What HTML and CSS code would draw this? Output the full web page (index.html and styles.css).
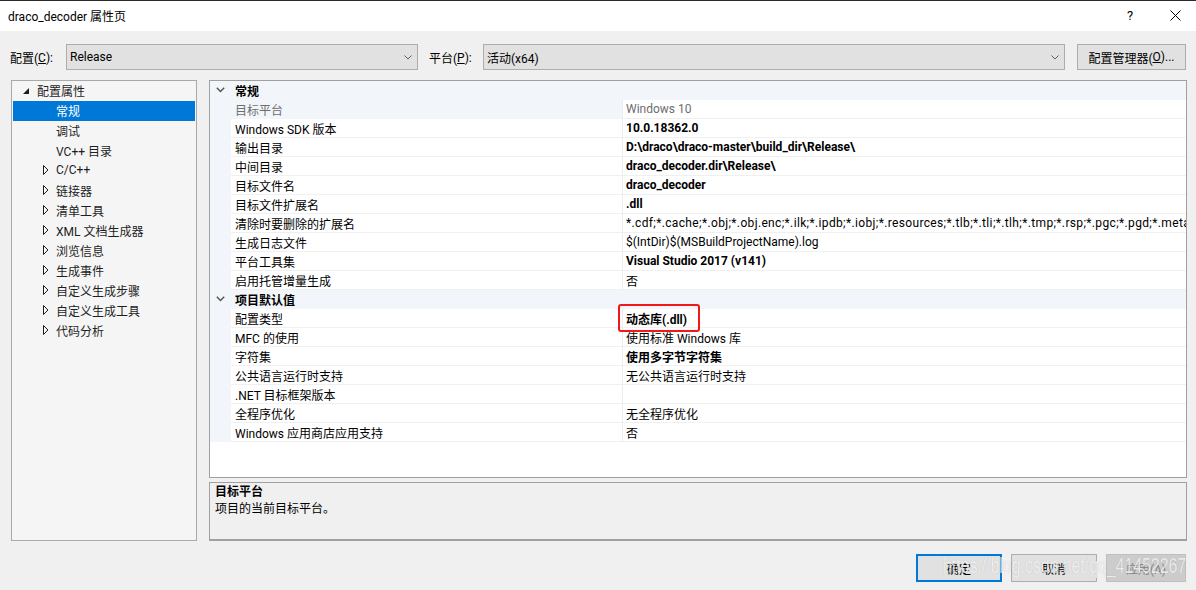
FILE: index.html
```html
<!DOCTYPE html>
<html lang="zh-CN">
<head>
<meta charset="utf-8">
<title>draco_decoder 属性页</title>
<link rel="stylesheet" href="styles.css">
</head>
<body>
<div class="window">
  <div class="titlebar">
    <span class="title">draco_decoder 属性页</span>
    <span class="tb-help">?</span>
    <span class="tb-close"><svg width="11" height="11" viewBox="0 0 11 11"><path d="M0.5 0.5 L10.5 10.5 M10.5 0.5 L0.5 10.5" stroke="#000" stroke-width="1" fill="none"/></svg></span>
  </div>

  <div class="toolbar">
    <span class="lbl lbl-cfg">配置(<u>C</u>):</span>
    <div class="combo combo-cfg"><span class="combo-text">Release</span><svg class="chev" width="8" height="5" viewBox="0 0 8 5"><polyline points="0.5,0.5 4,4 7.5,0.5" fill="none" stroke="#606060" stroke-width="1"/></svg></div>
    <span class="lbl lbl-plat">平台(<u>P</u>):</span>
    <div class="combo combo-plat"><span class="combo-text">活动(x64)</span><svg class="chev" width="8" height="5" viewBox="0 0 8 5"><polyline points="0.5,0.5 4,4 7.5,0.5" fill="none" stroke="#606060" stroke-width="1"/></svg></div>
    <button class="btn btn-mgr">配置管理器(<u>O</u>)...</button>
  </div>

  <div class="content">
    <div class="tree">
      <div class="tnode lvl0"><span class="twisty"><svg width="6" height="6" viewBox="0 0 6 6"><polygon points="6,0 6,6 0,6" fill="#1e1e1e"/></svg></span><span>配置属性</span></div>
      <div class="tnode lvl1 selected"><span class="twisty"></span><span>常规</span></div>
      <div class="tnode lvl1"><span class="twisty"></span><span>调试</span></div>
      <div class="tnode lvl1"><span class="twisty"></span><span>VC++ 目录</span></div>
      <div class="tnode lvl1"><span class="twisty"><svg class="tri" width="6" height="10" viewBox="0 0 6 10"><polygon points="0.5,0.5 5,5 0.5,9.5" fill="none" stroke="#1e1e1e" stroke-width="1"/></svg></span><span>C/C++</span></div>
      <div class="tnode lvl1"><span class="twisty"><svg class="tri" width="6" height="10" viewBox="0 0 6 10"><polygon points="0.5,0.5 5,5 0.5,9.5" fill="none" stroke="#1e1e1e" stroke-width="1"/></svg></span><span>链接器</span></div>
      <div class="tnode lvl1"><span class="twisty"><svg class="tri" width="6" height="10" viewBox="0 0 6 10"><polygon points="0.5,0.5 5,5 0.5,9.5" fill="none" stroke="#1e1e1e" stroke-width="1"/></svg></span><span>清单工具</span></div>
      <div class="tnode lvl1"><span class="twisty"><svg class="tri" width="6" height="10" viewBox="0 0 6 10"><polygon points="0.5,0.5 5,5 0.5,9.5" fill="none" stroke="#1e1e1e" stroke-width="1"/></svg></span><span>XML 文档生成器</span></div>
      <div class="tnode lvl1"><span class="twisty"><svg class="tri" width="6" height="10" viewBox="0 0 6 10"><polygon points="0.5,0.5 5,5 0.5,9.5" fill="none" stroke="#1e1e1e" stroke-width="1"/></svg></span><span>浏览信息</span></div>
      <div class="tnode lvl1"><span class="twisty"><svg class="tri" width="6" height="10" viewBox="0 0 6 10"><polygon points="0.5,0.5 5,5 0.5,9.5" fill="none" stroke="#1e1e1e" stroke-width="1"/></svg></span><span>生成事件</span></div>
      <div class="tnode lvl1"><span class="twisty"><svg class="tri" width="6" height="10" viewBox="0 0 6 10"><polygon points="0.5,0.5 5,5 0.5,9.5" fill="none" stroke="#1e1e1e" stroke-width="1"/></svg></span><span>自定义生成步骤</span></div>
      <div class="tnode lvl1"><span class="twisty"><svg class="tri" width="6" height="10" viewBox="0 0 6 10"><polygon points="0.5,0.5 5,5 0.5,9.5" fill="none" stroke="#1e1e1e" stroke-width="1"/></svg></span><span>自定义生成工具</span></div>
      <div class="tnode lvl1"><span class="twisty"><svg class="tri" width="6" height="10" viewBox="0 0 6 10"><polygon points="0.5,0.5 5,5 0.5,9.5" fill="none" stroke="#1e1e1e" stroke-width="1"/></svg></span><span>代码分析</span></div>
    </div>

    <div class="right">
      <div class="grid">
        <div class="section"><span class="gutter"><svg width="9" height="6" viewBox="0 0 9 6"><polyline points="0.8,0.8 4.5,4.5 8.2,0.8" fill="none" stroke="#555" stroke-width="1.5"/></svg></span><span class="sec-title">常规</span></div>
        <div class="prow"><span class="gutter"></span><span class="pname disabled">目标平台</span><span class="pval disabled">Windows 10</span></div>
        <div class="prow"><span class="gutter"></span><span class="pname">Windows SDK 版本</span><span class="pval b">10.0.18362.0</span></div>
        <div class="prow"><span class="gutter"></span><span class="pname">输出目录</span><span class="pval b">D:\draco\draco-master\build_dir\Release\</span></div>
        <div class="prow"><span class="gutter"></span><span class="pname">中间目录</span><span class="pval b">draco_decoder.dir\Release\</span></div>
        <div class="prow"><span class="gutter"></span><span class="pname">目标文件名</span><span class="pval b">draco_decoder</span></div>
        <div class="prow"><span class="gutter"></span><span class="pname">目标文件扩展名</span><span class="pval b">.dll</span></div>
        <div class="prow"><span class="gutter"></span><span class="pname">清除时要删除的扩展名</span><span class="pval wide">*.cdf;*.cache;*.obj;*.obj.enc;*.ilk;*.ipdb;*.iobj;*.resources;*.tlb;*.tli;*.tlh;*.tmp;*.rsp;*.pgc;*.pgd;*.meta;*.tlog;*.manifest;*.res;*.pch;*.exp</span></div>
        <div class="prow"><span class="gutter"></span><span class="pname">生成日志文件</span><span class="pval">$(IntDir)$(MSBuildProjectName).log</span></div>
        <div class="prow"><span class="gutter"></span><span class="pname">平台工具集</span><span class="pval b">Visual Studio 2017 (v141)</span></div>
        <div class="prow"><span class="gutter"></span><span class="pname">启用托管增量生成</span><span class="pval">否</span></div>
        <div class="section"><span class="gutter"><svg width="9" height="6" viewBox="0 0 9 6"><polyline points="0.8,0.8 4.5,4.5 8.2,0.8" fill="none" stroke="#555" stroke-width="1.5"/></svg></span><span class="sec-title">项目默认值</span></div>
        <div class="prow"><span class="gutter"></span><span class="pname">配置类型</span><span class="pval b marked">动态库(.dll)<span class="redbox"></span></span></div>
        <div class="prow"><span class="gutter"></span><span class="pname">MFC 的使用</span><span class="pval">使用标准 Windows 库</span></div>
        <div class="prow"><span class="gutter"></span><span class="pname">字符集</span><span class="pval b">使用多字节字符集</span></div>
        <div class="prow"><span class="gutter"></span><span class="pname">公共语言运行时支持</span><span class="pval">无公共语言运行时支持</span></div>
        <div class="prow"><span class="gutter"></span><span class="pname">.NET 目标框架版本</span><span class="pval"></span></div>
        <div class="prow"><span class="gutter"></span><span class="pname">全程序优化</span><span class="pval">无全程序优化</span></div>
        <div class="prow"><span class="gutter"></span><span class="pname">Windows 应用商店应用支持</span><span class="pval">否</span></div>
      </div>
      <div class="desc">
        <div class="desc-title">目标平台</div>
        <div class="desc-text">项目的当前目标平台。</div>
      </div>
    </div>
  </div>

  <div class="footer">
    <button class="btn btn-ok">确定</button>
    <button class="btn btn-cancel">取消</button>
    <button class="btn btn-apply" disabled>应用(A)</button>
  </div>

  <div class="watermark">https://blog.csdn.net/qq_41452267</div>
</div>
</body>
</html>
```

FILE: styles.css
```css
* { box-sizing: border-box; }
html, body { margin: 0; padding: 0; }
body {
  width: 1196px;
  height: 590px;
  overflow: hidden;
  background: #f0f0f0;
  font-family: Roboto, "Noto Sans CJK SC", sans-serif;
  font-size: 12px;
  color: #000;
}
.window {
  position: relative;
  width: 1196px;
  height: 590px;
  display: flex;
  flex-direction: column;
}

/* title bar */
.titlebar {
  height: 31px;
  flex: none;
  background: #fff;
  border-top: 1px solid #2b2b2b;
  display: flex;
  align-items: center;
  padding-left: 8px;
  padding-bottom: 1px;
}
.title { flex: 1; font-size: 12px; color: #000; }
.tb-help { width: 12px; text-align: center; font-size: 13px; margin-right: 34px; }
.tb-close { width: 11px; height: 11px; margin-right: 15px; display: flex; }

/* toolbar */
.toolbar {
  flex: none;
  height: 26px;
  margin-top: 13px;
  padding-left: 10px;
  display: flex;
  align-items: stretch;
}
.lbl { display: flex; align-items: center; padding-top: 1px; }
.lbl-cfg { width: 56px; }
.lbl-plat { width: 54px; margin-left: 11px; }
.combo {
  display: flex;
  align-items: center;
  background: #e1e1e1;
  border: 1px solid #adadad;
  padding-left: 3px;
  padding-right: 5px;
}
.combo-text { flex: 1; }
.combo-cfg { width: 352px; }
.combo-plat { width: 582px; }
.chev { flex: none; }
.btn {
  font: inherit;
  color: #000;
  background: #e1e1e1;
  border: 1px solid #adadad;
  padding: 0;
  display: flex;
  align-items: center;
  justify-content: center;
}
.btn-mgr { width: 109px; margin-left: 12px; }

/* content */
.content {
  flex: none;
  height: 461px;
  margin-top: 10px;
  display: flex;
}
.tree {
  width: 186px;
  margin-left: 11px;
  background: #f5f5f5;
  border: 1px solid #a9a9a9;
  padding-top: 0;
}
.tnode {
  height: 20px;
  display: flex;
  align-items: center;
  color: #1e1e1e;
  margin: 0 1px;
  padding-bottom: 2px;
}
.tnode.lvl0 { padding-left: 5px; }
.tnode.lvl1 { padding-left: 24px; }
.twisty { width: 19px; height: 18px; display: flex; align-items: center; flex: none; }
.lvl0 .twisty svg { margin-left: 5px; margin-top: 1px; }
.lvl1 .twisty svg { margin-left: 6px; }
.tnode.selected { background: #0078d7; color: #fff; }

.right {
  width: 978px;
  margin-left: 12px;
  display: flex;
  flex-direction: column;
}
.grid {
  height: 398px;
  background: #fff;
  border: 1px solid #a0a0a0;
  overflow: hidden;
}
.section {
  height: 19px;
  display: flex;
  align-items: center;
  background: #f2f5fa;
}
.gutter {
  width: 21px;
  flex: none;
  align-self: stretch;
  display: flex;
  align-items: center;
  background: #f2f5fa;
}
.section .gutter svg { margin-left: 6px; margin-top: -1px; }
.sec-title { font-weight: bold; padding-left: 4px; }
.prow {
  height: 19px;
  display: flex;
}
.pname {
  width: 391px;
  flex: none;
  padding-left: 4px;
  display: flex;
  align-items: center;
  border-bottom: 1px solid #f0f0f0;
  white-space: nowrap;
}
.pname.disabled { background: #f2f5fa; color: #6d6d6d; border-bottom-color: #f2f5fa; }
.pval {
  flex: 1;
  min-width: 0;
  padding-left: 3px;
  display: flex;
  align-items: center;
  border-left: 1px solid #ececec;
  border-bottom: 1px solid #f0f0f0;
  white-space: nowrap;
  overflow: hidden;
}
.pval.wide { letter-spacing: 0.35px; }
.pval.disabled { color: #6d6d6d; }
.pval.b { font-weight: bold; }
.pval.marked { position: relative; overflow: visible; }
.redbox {
  position: absolute;
  left: -5px;
  top: -5px;
  width: 82px;
  height: 28px;
  border: 2px solid #f01818;
  border-radius: 3px;
}

.desc {
  height: 59px;
  margin-top: 4px;
  border: 1px solid #a0a0a0;
  border-bottom-width: 2px;
  background: #f0f0f0;
  padding: 1px 5px 0;
  line-height: 17px;
}
.desc-title { font-weight: bold; }

/* footer */
.footer {
  flex: none;
  height: 28px;
  margin-top: 13px;
  padding-right: 10px;
  display: flex;
  justify-content: flex-end;
  gap: 9px;
}
.btn-ok { width: 86px; border: 2px solid #0078d7; }
.btn-cancel { width: 86px; }
.btn-apply { width: 80px; background: #cccccc; border-color: #bfbfbf; color: #838383; }

.watermark {
  position: absolute;
  left: 943px;
  top: 553px;
  font-family: "Liberation Sans", Arial, sans-serif;
  font-size: 22px;
  line-height: 26px;
  white-space: nowrap;
  color: rgba(255, 255, 255, 0.78);
  text-shadow: 0 0 1px rgba(0, 0, 0, 0.22);
  transform: scaleX(0.72);
  transform-origin: left top;
  pointer-events: none;
}
```
